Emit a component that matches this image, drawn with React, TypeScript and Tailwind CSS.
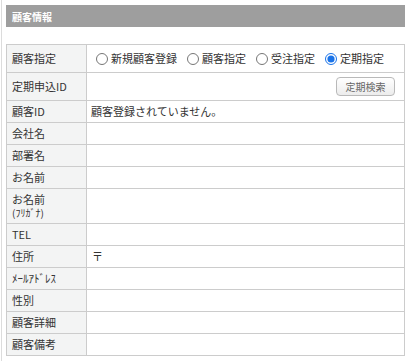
import React from 'react';

type Row = { label: React.ReactNode; h: string; value?: React.ReactNode };

const font = { fontFamily: '"Noto Sans CJK JP", "Liberation Sans", sans-serif' };

function RadioGroup() {
  const opts = ['新規顧客登録', '顧客指定', '受注指定', '定期指定'];
  return (
    <div className="flex items-center whitespace-nowrap">
      {opts.map((o, i) => (
        <label key={o} className="flex shrink-0 items-center mr-[5px]">
          <input
            type="radio"
            name="kokyaku"
            defaultChecked={i === 3}
            className="m-0 ml-[5px] mr-[3px] h-[12px] w-[12px] shrink-0 accent-[#1a73e8]"
          />
          <span>{o}</span>
        </label>
      ))}
    </div>
  );
}

export default function App() {
  const rows: Row[] = [
    { label: '顧客指定', h: 'h-[28px]', value: <RadioGroup /> },
    {
      label: '定期申込ID',
      h: 'h-[28px]',
      value: (
        <div className="flex w-full justify-end pr-[9px]">
          <button className="h-[19px] w-[59px] rounded-[4px] border border-[#b9b9b9] bg-gradient-to-b from-white to-[#ececec] text-[10px] leading-none text-[#666]">
            定期検索
          </button>
        </div>
      ),
    },
    { label: '顧客ID', h: 'h-[22px]', value: '顧客登録されていません。' },
    { label: '会社名', h: 'h-[22px]' },
    { label: '部署名', h: 'h-[22px]' },
    { label: 'お名前', h: 'h-[22px]' },
    {
      label: (
        <div className="flex flex-col gap-[1px]">
          <span className="leading-[13px]">お名前</span>
          <span className="text-[10px] leading-[12px]">(ﾌﾘｶﾞﾅ)</span>
        </div>
      ),
      h: 'h-[35px]',
    },
    { label: 'TEL', h: 'h-[22px]' },
    { label: '住所', h: 'h-[22px]', value: <span className="pl-[1px]">〒</span> },
    { label: 'ﾒｰﾙｱﾄﾞﾚｽ', h: 'h-[22px]' },
    { label: '性別', h: 'h-[22px]' },
    { label: '顧客詳細', h: 'h-[22px]' },
    { label: '顧客備考', h: 'h-[21px]' },
  ];

  return (
    <div className="min-h-[361px] bg-white" style={font}>
      <div className="ml-[1px] min-h-[361px] border-l border-[#dcdcdc] pl-[4px] pt-[5px]">
        <div className="flex h-[22px] w-[399px] items-center bg-[#9e9e9e] pl-[6px] text-[10px] font-bold text-white">
          顧客情報
        </div>
        <div className="mt-[17px] w-[399px] border border-[#cccccc] text-[11px] text-[#333]">
          {rows.map((r, i) => (
            <div
              key={i}
              className={`flex ${r.h} ${i < rows.length - 1 ? 'border-b border-[#cccccc]' : ''}`}
            >
              <div className="flex w-[80px] shrink-0 items-center border-r border-[#cccccc] bg-[#f3f4f4] pl-[5px]">
                {r.label}
              </div>
              <div className="flex min-w-0 flex-1 items-center pl-[4px]">{r.value}</div>
            </div>
          ))}
        </div>
      </div>
    </div>
  );
}
